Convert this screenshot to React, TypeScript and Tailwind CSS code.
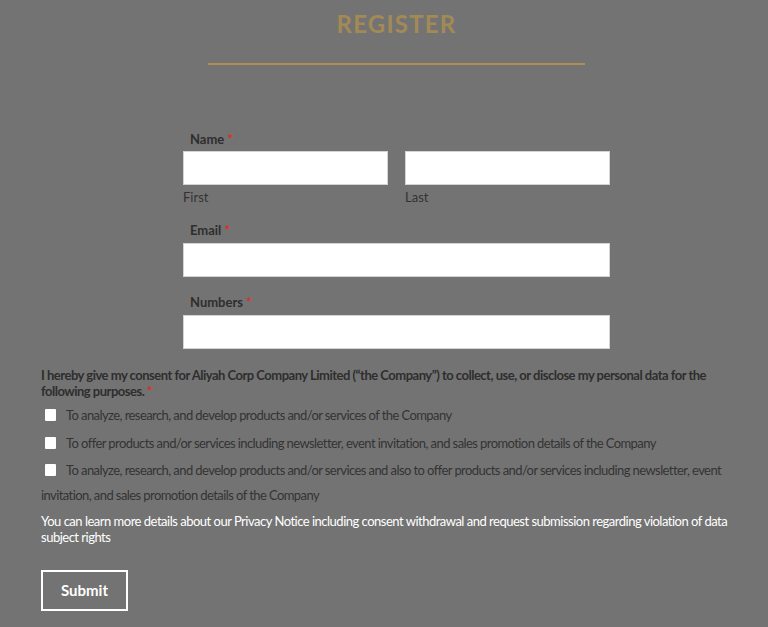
export default function App() {
    return (
        <div className="min-h-[627px] bg-[#737373] font-['Lato',sans-serif] text-[#2e2e2e] overflow-hidden">
            {/* Heading */}
            <div className="ml-[183px] w-[427px] pt-[9px] text-center">
                <h1 className="text-[24px] leading-[29px] font-bold tracking-[1.2px] text-[#a38a55]">REGISTER</h1>
                <div className="mx-auto mt-[25px] h-[1.5px] w-[377px] bg-[#ad8f4f]" />
            </div>

            {/* Fields */}
            <div className="ml-[183px] w-[427px] mt-[65.5px]">
                <div className="pl-[7px] text-[13px] leading-[18px] font-bold">
                    Name <span className="text-[#e02b27]">*</span>
                </div>
                <div className="mt-[3px] flex gap-[17px]">
                    <div className="flex-1">
                        <input className="block h-[34px] w-full border border-[#d4d4d4] bg-white" />
                        <div className="mt-[3px] text-[13px] leading-[18px] text-[#333]">First</div>
                    </div>
                    <div className="flex-1">
                        <input className="block h-[34px] w-full border border-[#d4d4d4] bg-white" />
                        <div className="mt-[3px] text-[13px] leading-[18px] text-[#333]">Last</div>
                    </div>
                </div>

                <div className="mt-[15px] pl-[7px] text-[13px] leading-[18px] font-bold">
                    Email <span className="text-[#e02b27]">*</span>
                </div>
                <input className="mt-[4px] block h-[34px] w-full border border-[#d4d4d4] bg-white" />

                <div className="mt-[16px] pl-[7px] text-[13px] leading-[18px] font-bold">
                    Numbers <span className="text-[#e02b27]">*</span>
                </div>
                <input className="mt-[4px] block h-[34px] w-full border border-[#d4d4d4] bg-white" />
            </div>

            {/* Consent */}
            <div className="ml-[41px] w-[692px] mt-[18px] text-[13px]">
                <p className="font-bold leading-[16px] tracking-[-0.5px]">
                    I hereby give my consent for Aliyah Corp Company Limited (“the Company”) to collect, use, or disclose my personal data for the following purposes. <span className="text-[#e02b27]">*</span>
                </p>
                <div className="mt-[4px] leading-[25px] tracking-[-0.58px] text-[#333]">
                    <label className="block">
                        <input type="checkbox" className="ml-[4px] mr-[10px] inline-block h-[12px] w-[11px] appearance-none rounded-[1px] bg-white align-[-1px]" />
                        To analyze, research, and develop products and/or services of the Company
                    </label>
                    <label className="mt-[3px] block">
                        <input type="checkbox" className="ml-[4px] mr-[10px] inline-block h-[12px] w-[11px] appearance-none rounded-[1px] bg-white align-[-1px]" />
                        To offer products and/or services including newsletter, event invitation, and sales promotion details of the Company
                    </label>
                    <label className="mt-[2px] block">
                        <input type="checkbox" className="ml-[4px] mr-[10px] inline-block h-[12px] w-[11px] appearance-none rounded-[1px] bg-white align-[-1px]" />
                        To analyze, research, and develop products and/or services and also to offer products and/or services including newsletter, event invitation, and sales promotion details of the Company
                    </label>
                </div>
                <p className="mt-[5px] leading-[16px] tracking-[-0.5px] text-white">
                    You can learn more details about our Privacy Notice including consent withdrawal and request submission regarding violation of data subject rights
                </p>
                <button className="mt-[25px] h-[41px] w-[87px] border-2 border-white text-[15px] font-bold text-white">
                    Submit
                </button>
            </div>
        </div>
    );
}
